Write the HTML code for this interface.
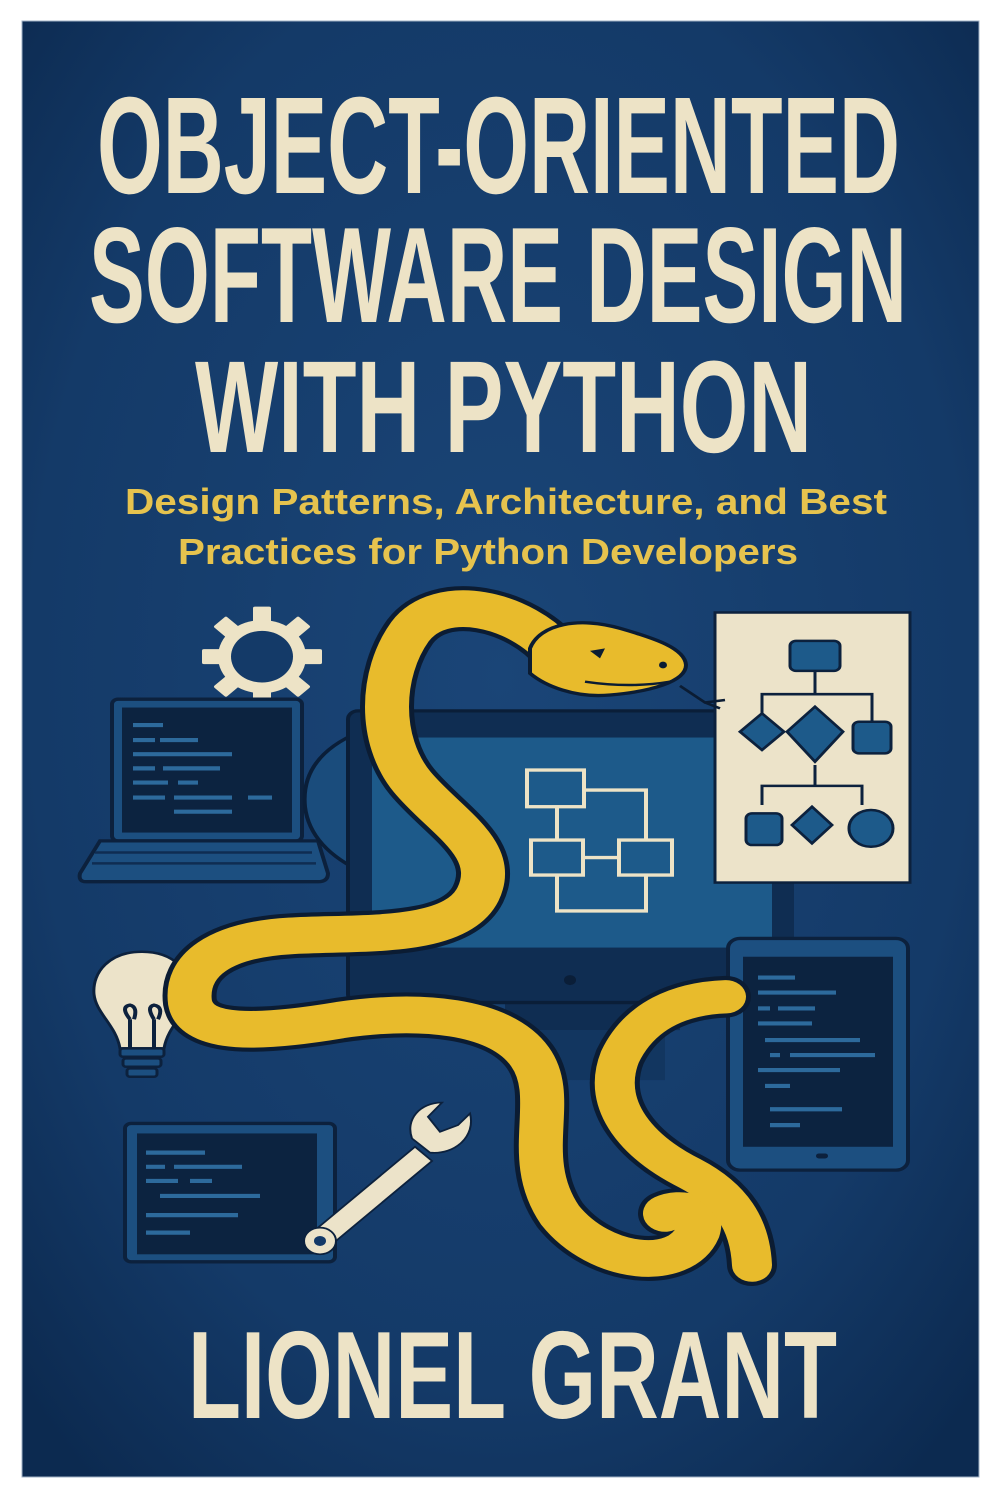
<!DOCTYPE html>
<html><head><meta charset="utf-8"><style>
html,body{margin:0;padding:0;background:#fff;width:1000px;height:1499px;overflow:hidden}
svg{display:block}
</style></head><body>
<svg width="1000" height="1499" viewBox="0 0 1000 1499" xmlns="http://www.w3.org/2000/svg">
<defs>
<radialGradient id="bg" cx="50%" cy="45%" r="70%">
<stop offset="0" stop-color="#1a4577"/><stop offset="0.7" stop-color="#143a68"/><stop offset="1" stop-color="#0c2a50"/>
</radialGradient>
</defs>
<rect x="0" y="0" width="1000" height="1499" fill="#fff"/>
<rect x="22" y="21" width="957" height="1456" fill="url(#bg)" stroke="#9fb0c4" stroke-width="1"/>

<g font-family="'Liberation Sans Narrow','Liberation Sans',sans-serif" font-weight="bold" fill="#ede3c6">
<text x="97" y="193" font-size="138" textLength="803" lengthAdjust="spacingAndGlyphs">OBJECT-ORIENTED</text>
<text x="89" y="322" font-size="136" textLength="818" lengthAdjust="spacingAndGlyphs">SOFTWARE DESIGN</text>
<text x="195" y="452" font-size="131" textLength="617" lengthAdjust="spacingAndGlyphs">WITH PYTHON</text>
<text x="188" y="1418" font-size="124" textLength="649" lengthAdjust="spacingAndGlyphs">LIONEL GRANT</text>
</g>
<g font-family="'Liberation Sans Narrow','Liberation Sans',sans-serif" font-weight="bold" fill="#e6c34e" font-size="36">
<text x="125" y="514" textLength="762" lengthAdjust="spacingAndGlyphs">Design Patterns, Architecture, and Best</text>
<text x="178" y="564" textLength="620" lengthAdjust="spacingAndGlyphs">Practices for Python Developers</text>
</g>

<g transform="translate(0,590) scale(1,0.8335) translate(0,-590)">
<!-- gear -->
<g transform="translate(262,670)" fill="#ede3c6">
<rect x="-9" y="-60" width="18" height="22" rx="2"/>
<rect x="-9" y="-60" width="18" height="22" rx="2" transform="rotate(45)"/>
<rect x="-9" y="-60" width="18" height="22" rx="2" transform="rotate(90)"/>
<rect x="-9" y="-60" width="18" height="22" rx="2" transform="rotate(135)"/>
<rect x="-9" y="-60" width="18" height="22" rx="2" transform="rotate(180)"/>
<rect x="-9" y="-60" width="18" height="22" rx="2" transform="rotate(225)"/>
<rect x="-9" y="-60" width="18" height="22" rx="2" transform="rotate(270)"/>
<rect x="-9" y="-60" width="18" height="22" rx="2" transform="rotate(315)"/>
<circle r="44"/>
<circle r="31" fill="#143a68"/>
</g>

<!-- laptop -->
<rect x="112" y="721" width="190" height="170" rx="6" fill="#1c4f80" stroke="#0c213d" stroke-width="4"/>
<rect x="122" y="731" width="170" height="150" fill="#0c2340"/>
<g stroke="#2d6a9c" stroke-width="5">
<line x1="133" y1="752" x2="163" y2="752"/><line x1="133" y1="770" x2="155" y2="770"/><line x1="160" y1="770" x2="198" y2="770"/>
<line x1="133" y1="787" x2="232" y2="787"/><line x1="133" y1="804" x2="155" y2="804"/><line x1="163" y1="804" x2="220" y2="804"/>
<line x1="133" y1="821" x2="168" y2="821"/><line x1="178" y1="821" x2="198" y2="821"/><line x1="133" y1="839" x2="165" y2="839"/><line x1="174" y1="839" x2="232" y2="839"/><line x1="248" y1="839" x2="272" y2="839"/><line x1="174" y1="856" x2="232" y2="856"/>
</g>
<path d="M100 891 H318 L328 930 Q328 940 318 940 H86 Q78 940 80 930 Z" fill="#1c4f80" stroke="#0c213d" stroke-width="4"/>
<line x1="95" y1="905" x2="312" y2="905" stroke="#0f2d52" stroke-width="3"/>
<line x1="92" y1="918" x2="316" y2="918" stroke="#0f2d52" stroke-width="3"/>

<!-- monitor -->
<rect x="505" y="1083" width="175" height="35" fill="#0f2d52"/>
<rect x="520" y="1118" width="145" height="60" fill="#123660"/>
<path d="M360 760 Q300 790 305 850 Q310 900 365 930 Z" fill="#1a4c7c" stroke="#0a1e38" stroke-width="4"/>
<rect x="348" y="735" width="428" height="350" rx="10" fill="#0f2d52" stroke="#0a1e38" stroke-width="4"/>
<rect x="372" y="767" width="400" height="252" fill="#1d5a8a"/>
<circle cx="570" cy="1058" r="6" fill="#0a1e38"/>
<g fill="none" stroke="#ede3c6" stroke-width="4">
<rect x="527" y="806" width="57" height="44"/>
<rect x="531" y="890" width="52" height="42"/>
<rect x="619" y="890" width="53" height="42"/>
<path d="M584 830 H646 V890 M557 850 V890 M583 911 H619 M557 932 V975 H646 V932"/>
</g>

<!-- board -->
<rect x="774" y="940" width="20" height="68" fill="#0f2d52"/>
<rect x="715" y="617" width="195" height="324" fill="#ece3c9" stroke="#0c213d" stroke-width="3"/>
<g fill="#1d5a8a" stroke="#0c213d" stroke-width="3">
<rect x="790" y="651" width="50" height="36" rx="6"/>
<path d="M815 687 V715 M762 738 V715 H872 V748 M815 800 V825 M762 848 V825 H862 V848" fill="none"/>
<path d="M762 738 L784 760 L762 782 L740 760 Z"/>
<path d="M815 730 L843 760 L815 796 L787 760 Z"/>
<rect x="853" y="748" width="38" height="38" rx="6"/>
<rect x="746" y="858" width="36" height="38" rx="6"/>
<path d="M812 850 L832 872 L812 894 L792 872 Z"/>
<circle cx="871" cy="876" r="22"/>
</g>

<!-- tablet -->
<rect x="728" y="1008" width="180" height="278" rx="12" fill="#1c4f80" stroke="#0c213d" stroke-width="4"/>
<rect x="743" y="1030" width="150" height="228" fill="#0c2340"/>
<rect x="816" y="1266" width="12" height="6" rx="3" fill="#0c213d"/>
<g stroke="#2d6a9c" stroke-width="5">
<line x1="758" y1="1055" x2="795" y2="1055"/><line x1="758" y1="1073" x2="836" y2="1073"/><line x1="758" y1="1092" x2="770" y2="1092"/><line x1="778" y1="1092" x2="815" y2="1092"/>
<line x1="758" y1="1110" x2="812" y2="1110"/><line x1="765" y1="1130" x2="860" y2="1130"/><line x1="770" y1="1148" x2="780" y2="1148"/><line x1="790" y1="1148" x2="875" y2="1148"/>
<line x1="758" y1="1166" x2="840" y2="1166"/><line x1="765" y1="1185" x2="790" y2="1185"/><line x1="770" y1="1213" x2="842" y2="1213"/><line x1="770" y1="1232" x2="800" y2="1232"/>
</g>

<!-- bottom-left screen -->
<rect x="125" y="1230" width="210" height="166" rx="6" fill="#1c4f80" stroke="#0c213d" stroke-width="4"/>
<rect x="137" y="1242" width="180" height="145" fill="#0c2340"/>
<g stroke="#2d6a9c" stroke-width="5">
<line x1="146" y1="1265" x2="205" y2="1265"/><line x1="146" y1="1282" x2="165" y2="1282"/><line x1="174" y1="1282" x2="242" y2="1282"/>
<line x1="146" y1="1299" x2="178" y2="1299"/><line x1="190" y1="1299" x2="212" y2="1299"/><line x1="160" y1="1317" x2="260" y2="1317"/>
<line x1="146" y1="1340" x2="238" y2="1340"/><line x1="146" y1="1361" x2="190" y2="1361"/>
</g>

<!-- bulb -->
<g stroke="#0c213d" stroke-width="3">
<path d="M142 1024 C110 1024 92 1048 94 1075 C96 1098 116 1112 120 1140 H164 C168 1112 188 1098 190 1075 C192 1048 174 1024 142 1024 Z" fill="#ece3c9"/>
<path d="M130 1140 V1105 M154 1140 V1105 M130 1105 Q120 1090 130 1088 Q138 1090 134 1105 M154 1105 Q146 1090 154 1088 Q164 1090 158 1105" fill="none" stroke-width="4"/>
<rect x="120" y="1140" width="44" height="10" rx="3" fill="#1c4f80"/>
<rect x="123" y="1152" width="38" height="10" rx="3" fill="#1c4f80"/>
<rect x="127" y="1164" width="30" height="10" rx="3" fill="#1c4f80"/>
</g>

<!-- wrench -->
<g fill="#ece3c9" stroke="#0c213d" stroke-width="2">
<path d="M311 1362 L415 1258 L432 1275 L328 1379 Z"/>
<circle cx="320" cy="1371" r="16"/>
<path d="M412 1248 C405 1225 420 1205 442 1205 L428 1222 L440 1240 L458 1232 L470 1218 C476 1245 455 1268 430 1265 Z"/>
</g>
<circle cx="320" cy="1371" r="6" fill="#143a68"/>

<!-- snake -->
<g fill="none" stroke-linecap="round" stroke-linejoin="round">
<path d="M560 668 C520 610 440 592 410 640 C380 690 378 770 412 820 C445 868 500 900 478 955 C455 1010 360 1000 290 1005 C220 1010 185 1040 190 1085 C196 1125 260 1122 340 1106 C420 1092 500 1100 530 1150 C560 1200 520 1270 560 1340 C600 1400 680 1410 698 1360 C705 1335 680 1330 665 1338" stroke="#0b1c33" stroke-width="54"/>
<path d="M726 1078 C680 1080 640 1100 620 1150 C600 1210 640 1260 690 1290 C730 1315 750 1350 752 1400" stroke="#0b1c33" stroke-width="50"/>
<path d="M560 668 C520 610 440 592 410 640 C380 690 378 770 412 820 C445 868 500 900 478 955 C455 1010 360 1000 290 1005 C220 1010 185 1040 190 1085 C196 1125 260 1122 340 1106 C420 1092 500 1100 530 1150 C560 1200 520 1270 560 1340 C600 1400 680 1410 698 1360 C705 1335 680 1330 665 1338" stroke="#e8bb2c" stroke-width="44"/>
<path d="M726 1078 C680 1080 640 1100 620 1150 C600 1210 640 1260 690 1290 C730 1315 750 1350 752 1400" stroke="#e8bb2c" stroke-width="40"/>
</g>
<path d="M530 660 C540 630 580 622 620 636 C655 648 685 660 686 680 C686 700 650 712 610 716 C575 720 545 705 530 690 Z" fill="#e8bb2c" stroke="#0b1c33" stroke-width="4"/>
<path d="M590 663 L605 660 L600 672 Z" fill="#0b1c33"/>
<circle cx="663" cy="680" r="4" fill="#0b1c33"/>
<path d="M585 700 Q630 708 670 700" fill="none" stroke="#0b1c33" stroke-width="3"/>
<path d="M680 705 L705 725 L725 722 M705 725 L720 732" fill="none" stroke="#0b1c33" stroke-width="3"/>
</g>
</svg>
</body></html>
